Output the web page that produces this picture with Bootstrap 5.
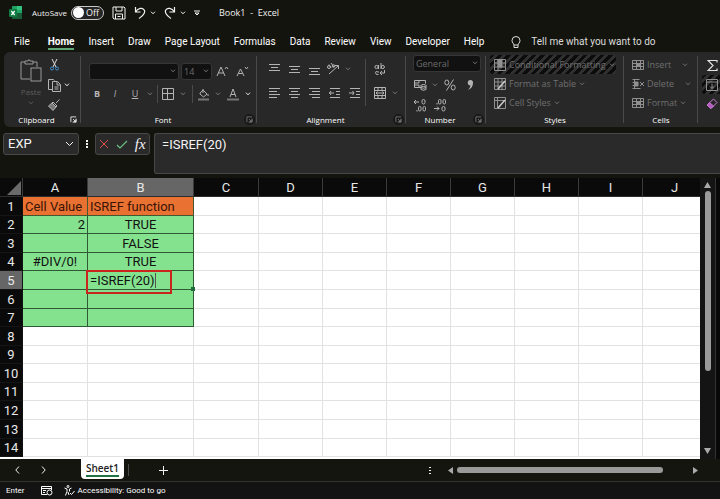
<!DOCTYPE html>
<html lang="en">
<head>
<meta charset="utf-8">
<meta name="viewport" content="width=device-width, initial-scale=1">
<title>Book1 - Excel</title>
<link href="https://cdn.jsdelivr.net/npm/bootstrap@5.3.0/dist/css/bootstrap.min.css" rel="stylesheet">
<style>
:root { --line:#4a4a4a; --dim:#707070; --ink:#b4b4b4; --panel:#282828; }
body { font-family:"Open Sans","Noto Sans",sans-serif; font-size:9px; line-height:12px; color:#f2f2f2; background:#14140f; overflow-x:hidden; }
button { background:none; border:0; padding:0; color:inherit; display:inline-flex; align-items:center; justify-content:center; flex:none; }
svg { flex:none; fill:none; stroke:currentColor; stroke-width:1; display:block; }
.topbar { height:25px; padding-left:9px; }
.topbar label { font-size:8px; margin:0 4px 0 10px; }
.doc-title { margin-left:11px; }
.autosave { width:33px; height:14px; border:1px solid #c8c8c8; border-radius:7px; background:#242424; padding:0 4px 0 1px; justify-content:space-between; }
.knob { width:11px; height:11px; border-radius:50%; background:#fff; }
.tabs { height:27px; padding:7px 0 0 14px; gap:14px; font-family:Roboto,sans-serif; font-size:10px; line-height:14px; }
.tabs a { color:#fff; text-decoration:none; border-bottom:2px solid transparent; line-height:13px; }
.tabs a.current { font-weight:700; border-color:#5fa777; margin-left:4px; }
.tell { gap:10px; margin-left:13px; color:#dcdcdc; }
.ribbon { margin-left:4px; height:75px; background:var(--panel); border-radius:6px 0 0 6px; overflow:hidden; color:var(--ink); }
.grp { position:relative; flex:none; padding-top:3px; }
.grp::after { content:""; position:absolute; right:0; top:4px; bottom:4px; width:1px; background:var(--line); }
.g-clip { width:77px; } .g-font { width:176px; } .g-align { width:149px; } .g-num { width:80px; } .g-style { width:138px; } .g-cells { width:74px; }
.glabel { height:12px; font-size:8px; line-height:12px; color:#fff; text-align:center; padding-right:12px; }
.glabel.mid { padding-right:0; }
.gbody { height:59px; }
.launch { position:absolute; right:2px; bottom:2px; width:11px; height:11px; border-radius:50%; background:#191919; color:#777; }
.launch.bright { background:none; color:#eee; }
.w-10px { width:10px; } .w-14px { width:14px; } .w-20px { width:20px; } .w-16px { width:16px; }
.line-h { height:20px; }
.vr-line { width:1px; height:18px; background:var(--line); flex:none; }
.vr-line.tall { height:47px; }
.vr-line.short { height:12px; }
.tight { margin:0 2px; }
.soft { color:#777; } .bright-ink { color:#eee; }
.paste { color:#5c5c5c; font-size:8px; gap:3px; padding-top:3px; }
.paste svg:first-child { color:#999; }
.drop { appearance:none; background:#111; border:1px solid #363636; border-radius:3px; color:#6c6c6c; font-size:9px; line-height:12px; height:17px; padding:0 0 0 2px; width:100%; }
.dropwrap { position:relative; flex:none; }
.d-name { width:90px; } .d-size { width:31px; margin-left:2px; } .d-num { width:68px; margin:0 0 3px 3px; }
.dropwrap svg { position:absolute; right:3px; top:6px; color:#777; pointer-events:none; }
.cmd { height:19px; color:var(--dim); gap:3px; justify-content:flex-start; border-radius:3px; }
.cmd svg:first-child { color:#909090; }
.hatch { background:repeating-linear-gradient(135deg,#0c0c0c 0 3px,#303030 3px 6px); }
.fbar { padding:6px 0 4px 3px; gap:4px; }
.box { background:#2a2a2a; border:1px solid #484848; border-radius:3px; color:#f4f4f4; }
.namebox { width:76px; height:22px; }
.entrybox { width:55px; height:22px; }
.formula { height:41px; resize:none; padding:3px 7px; outline:0; }
.cellfont { font-family:Roboto,"Liberation Sans",sans-serif; font-size:13px; line-height:16px; }
.fx { font-family:"Liberation Serif",serif; font-style:italic; font-size:15px; }
.cancel { color:#d84b4f; } .accept { color:#6cc083; }
.sheetwrap { background:#fff; overflow:hidden; min-width:0; height:281px; }
.grid { table-layout:fixed; width:707px; border-collapse:separate; border-spacing:0; color:#111; }
.grid th, .grid td { padding:1px 2px 0; height:19px; line-height:16px; border-right:1px solid #e2e2e2; border-bottom:1px solid #e2e2e2; white-space:nowrap; font-weight:400; }
.grid tr.low > * { height:18px; }
.grid thead th, .grid tbody th { background:#0a0a0a; color:#e8e8e8; text-align:center; border-color:#2c2c2c; }
.grid thead th { border-right-color:#3a3a3a; }
.grid tbody th { border-bottom-color:#151515; border-right-color:#111; }
.grid .picked { background:#666 !important; }
.grid .orange { background:#e97132; border-color:#44572f; color:#3a1404; }
.grid .green { background:#84e28f; border-color:#2f5a35; }
.c-head { width:23px; } .c-a { width:65px; } .c-b { width:106px; }
.edit { position:relative; }
.edit::before { content:""; position:absolute; left:-2px; top:-1px; width:86px; height:24px; border:2px solid #c9251c; z-index:1; }
.edit::after { content:""; position:absolute; right:-2px; bottom:-2px; width:4px; height:4px; background:#1f6b3c; }
.caret { border-right:1px solid #555; }
.corner { width:0; height:0; border-left:14px solid transparent; border-bottom:14px solid #6a6a6a; margin-left:5px; }
.vbar { width:20px; background:#141414; border-right:4px solid #080808; box-shadow:inset -1px 0 #333; padding:4px 1px 1px 0; }
.thumb-v { width:6px; border-radius:4px; background:#9a9a9a; height:180px; margin-top:3px; }
.thumb-h { height:6px; border-radius:3px; background:#9a9a9a; width:206px; margin:0 30px 0 4px; }
.strip { height:23px; background:#14150f; border-bottom:1px solid #333; padding:0 22px 0 12px; }
.sheettab { background:#fff; color:#222; height:20px; padding:0 5px; margin:0 4px 0 33px; border-radius:0 0 4px 4px; font-size:10px; font-weight:600; align-self:flex-start; }
.sheettab span { border-bottom:2px solid #1f7245; line-height:14px; }
.addsheet { margin-left:30px; }
.status { font-family:Roboto,sans-serif; font-size:8px; padding-left:6px; min-height:17px; background:#131313; color:#fff; }
.access { margin-left:11px; gap:3px; }
</style>
<script src="https://cdn.jsdelivr.net/npm/bootstrap@5.3.0/dist/js/bootstrap.bundle.min.js"></script>
</head>
<body class="d-flex flex-column min-vh-100">
<svg class="d-none">
  <symbol id="chev" viewBox="0 0 6 4"><path d="M1 .7 3 2.800 5 .7"/></symbol>
  <symbol id="launchi" viewBox="0 0 8 8"><path d="M1 7V1h6M7 3v4H3M3.500 3.500 6.500 6.500M6.500 4v2.500H4"/></symbol>
  <symbol id="tableicon" viewBox="0 0 12 12"><path d="M.5 1.500h11v9H.5zM.5 4.500h11M.5 7.500h11M4.500 1.500v9M8.500 1.500v9"/><path d="M4.500 4.500h4v3h-4z" fill="currentColor"/></symbol>
</svg>

<header class="topbar d-flex align-items-center">
  <svg width="13" height="13" viewBox="0 0 13 13"><g stroke="none"><rect x="3" y="0" width="10" height="13" rx="1" fill="#21a366"/><path fill="#33c481" d="M8 0h4q1 0 1 1v3H8z"/><path fill="#185c37" d="M3 7h10v5q0 1-1 1H4q-1 0-1-1z"/><rect y="3" width="8" height="8" rx="1" fill="#107c41"/></g><path d="m2.300 5 3.400 4M5.700 5 2.300 9" stroke="#fff" stroke-width="1.200"/></svg>
  <label for="autosave">AutoSave</label>
  <button id="autosave" class="autosave" role="switch" aria-checked="false"><span class="knob"></span><span>Off</span></button>
  <button class="ms-2" aria-label="Save"><svg width="14" height="14" viewBox="0 0 14 14"><path d="M1 1h11l1 1v11H2l-1-1zM4 1v4h6V1M3.500 13V8h7v5M5.500 10.500h3"/></svg></button>
  <button class="ms-2" aria-label="Undo"><svg width="12" height="14" viewBox="0 0 12 14"><path d="M1.500 1v5h5M1.500 6C4 2 9 1 10.500 4.500 11.500 8 8 10 5 12.500" stroke-width="1.200"/></svg></button>
  <button class="ms-1" aria-label="Undo list"><svg width="6" height="4"><use href="#chev"/></svg></button>
  <button class="ms-2" aria-label="Redo"><svg width="12" height="14" viewBox="0 0 12 14"><path d="M10.500 1v5h-5M10.500 6C8 2 3 1 1.500 4.500.5 8 4 10 7 12.500" stroke-width="1.200"/></svg></button>
  <button class="ms-1" aria-label="Redo list"><svg width="6" height="4"><use href="#chev"/></svg></button>
  <button class="ms-1 px-1" aria-label="Customize toolbar"><svg width="6" height="6" viewBox="0 0 6 6"><path d="M0 1h6M1 3l2 2 2-2z"/></svg></button>
  <span class="doc-title ps-1">Book1&nbsp; -&nbsp; Excel</span>
</header>

<nav class="tabs d-flex align-items-center">
  <a href="#">File</a><a href="#" class="current">Home</a><a href="#">Insert</a><a href="#">Draw</a><a href="#">Page Layout</a><a href="#">Formulas</a><a href="#">Data</a><a href="#">Review</a><a href="#">View</a><a href="#">Developer</a><a href="#">Help</a>
  <button class="tell"><svg width="10" height="13" viewBox="0 0 10 13"><path d="M3 9C3 7.500 1 7 1 4.500a4 4 0 0 1 8 0C9 7 7 7.500 7 9zM3 9v2.500h4V9"/></svg>Tell me what you want to do</button>
</nav>

<section class="ribbon d-flex">
  <div class="grp g-clip">
    <div class="gbody d-flex ps-3">
      <button class="paste flex-column justify-content-start"><svg width="22" height="25" viewBox="0 0 22 25"><path d="M10 21H1V4h4M13 4h4v5M5 6V3h3q1-3 2 0h3v3z"/><rect x="11" y="10" width="10" height="13"/></svg>Paste<svg width="6" height="4"><use href="#chev"/></svg></button>
      <div class="d-flex flex-column ms-1">
        <button class="line-h w-16px" aria-label="Cut"><svg width="9" height="12" viewBox="0 0 9 12"><path d="M2 0l4 8M7 0 3 8" stroke="#ddd"/><g stroke="#3b8fd0"><circle cx="2" cy="9.500" r="1.500"/><circle cx="7" cy="9.500" r="1.500"/></g></svg></button>
        <span class="d-flex"><button class="line-h w-16px" aria-label="Copy"><svg width="13" height="13" viewBox="0 0 13 13"><path d="M4.500 10.500h-4v-10h5l1 1M4.500 2.500h5l3 3v7h-8zM9 3v3h3M6.500 8h4M6.500 10h4"/></svg></button><button class="w-10px bright-ink" aria-label="Copy list"><svg width="6" height="4"><use href="#chev"/></svg></button></span>
        <button class="line-h w-16px" aria-label="Format painter"><svg width="12" height="12" viewBox="0 0 12 12"><path d="M11.500.5 8 4M5 3l4 4-1 1-4-4z"/><path d="M4 4 .5 7 5 11.500 8 8z" fill="#777"/></svg></button>
      </div>
    </div>
    <div class="glabel">Clipboard</div>
    <button class="launch bright" aria-label="Clipboard settings"><svg width="7" height="7"><use href="#launchi"/></svg></button>
  </div>

  <div class="grp g-font">
    <div class="gbody ps-2 pt-2">
      <div class="d-flex align-items-center">
        <div class="dropwrap d-name"><select class="drop" aria-label="Font"><option></option></select><svg width="6" height="4"><use href="#chev"/></svg></div>
        <div class="dropwrap d-size"><select class="drop" aria-label="Font size"><option>14</option></select><svg width="6" height="4"><use href="#chev"/></svg></div>
        <button class="w-20px" aria-label="Grow font"><svg width="13" height="12" viewBox="0 0 13 12"><path d="M1 10 5 1l4 9M2.500 7h5M9 3l1.500-2L12 3"/></svg></button>
        <button class="w-20px" aria-label="Shrink font"><svg width="13" height="12" viewBox="0 0 13 12"><path d="M1 10 4.500 3 8 10M2.500 7.500h4M9 1l1.500 2L12 1"/></svg></button>
      </div>
      <div class="d-flex align-items-center line-h mt-1">
        <button class="w-16px fw-bold">B</button><button class="w-20px fst-italic">I</button><button class="w-20px text-decoration-underline">U</button><button class="w-10px soft" aria-label="Underline list"><svg width="6" height="4"><use href="#chev"/></svg></button>
        <span class="vr-line tight"></span>
        <button class="w-16px" aria-label="Borders"><svg width="12" height="12" viewBox="0 0 12 12"><path d="M.5.5h11v11H.5zM5.500 .5v11M.5 5.500h11"/></svg></button><button class="w-14px soft" aria-label="Border list"><svg width="6" height="4"><use href="#chev"/></svg></button>
        <span class="vr-line tight"></span>
        <button class="w-16px" aria-label="Fill colour"><svg width="13" height="13" viewBox="0 0 13 13"><path d="M6 1v4M3 5l3-3 4 4-3.500 3L3 6zM11 6v2"/><path d="M1 11.500h11" stroke="#777" stroke-width="2"/></svg></button><button class="w-14px soft" aria-label="Fill list"><svg width="6" height="4"><use href="#chev"/></svg></button>
        <button class="w-16px" aria-label="Font colour"><svg width="12" height="13" viewBox="0 0 12 13"><path d="M3 9 6 1l3 8M4 6.500h4"/><path d="M0 11.500h12" stroke="#777" stroke-width="2"/></svg></button><button class="w-14px bright-ink" aria-label="Font colour list"><svg width="6" height="4"><use href="#chev"/></svg></button>
      </div>
    </div>
    <div class="glabel">Font</div>
    <button class="launch" aria-label="Font settings"><svg width="7" height="7"><use href="#launchi"/></svg></button>
  </div>

  <div class="grp g-align">
    <div class="gbody ps-1 pt-1 d-flex align-items-start">
      <div class="ps-1">
        <div class="d-flex line-h">
          <button class="w-20px" aria-label="Top align"><svg width="12" height="14" viewBox="0 0 12 14"><path d="M0 2.500h11M2 5.500h7M0 8.500h11"/></svg></button>
          <button class="w-20px" aria-label="Middle align"><svg width="12" height="14" viewBox="0 0 12 14"><path d="M0 4.500h11M2 7.500h7M0 10.500h11"/></svg></button>
          <button class="w-20px" aria-label="Bottom align"><svg width="12" height="14" viewBox="0 0 12 14"><path d="M0 6.500h11M2 9.500h7M0 12.500h11"/></svg></button>
          <button class="w-16px" aria-label="Orientation"><svg width="14" height="14" viewBox="0 0 14 14"><path d="M3 12 12 4M9 3.500h3.500V7"/><circle cx="3" cy="5" r="1.500"/><path d="m3 2.500 2 3.500M5 1l3 4"/><circle cx="7.500" cy="4" r="1.300"/></svg></button>
          <button class="w-14px soft" aria-label="Orientation list"><svg width="6" height="4"><use href="#chev"/></svg></button>
        </div>
        <div class="d-flex line-h mt-1">
          <button class="w-20px" aria-label="Align left"><svg width="12" height="12" viewBox="0 0 12 12"><path d="M0 1.500h11M0 4.500h8M0 7.500h11M0 10.500h8"/></svg></button>
          <button class="w-20px" aria-label="Center"><svg width="12" height="12" viewBox="0 0 12 12"><path d="M0 1.500h11M2 4.500h7M0 7.500h11M2 10.500h7"/></svg></button>
          <button class="w-20px" aria-label="Align right"><svg width="12" height="12" viewBox="0 0 12 12"><path d="M0 1.500h11M3 4.500h8M0 7.500h11M3 10.500h8"/></svg></button>
          <button class="w-20px" aria-label="Decrease indent"><svg width="12" height="12" viewBox="0 0 12 12"><path d="M1 1.500h10M7 4.500h4M7 7.500h4M1 10.500h10M0 6h5M2 4 .5 6 2 8"/></svg></button>
          <button class="w-20px" aria-label="Increase indent"><svg width="12" height="12" viewBox="0 0 12 12"><path d="M1 1.500h10M7 4.500h4M7 7.500h4M1 10.500h10M0 6h5M3.500 4 5 6 3.500 8"/></svg></button>
        </div>
      </div>
      <span class="vr-line tall"></span>
      <div class="ms-1">
        <button class="line-h w-20px" aria-label="Wrap text"><svg width="12" height="13" viewBox="0 0 12 13"><circle cx="2.500" cy="4" r="1.600"/><path d="M4.500 2v4M7 0v6M5 9H4Q1.500 7.500 1.500 9.800 1.500 12 4.500 11.500M10.500 7v3H6M8 8l-2 2 2 2"/><circle cx="8.800" cy="4" r="1.600"/></svg></button>
        <div class="d-flex mt-1"><button class="line-h w-20px" aria-label="Merge"><svg width="12" height="12" viewBox="0 0 12 12"><path d="M.5.5h11v11H.5zM.5 3.500h11M.5 8.500h11M4 .5v3M8 .5v3M4 8.500v3M8 8.500v3M2 6h8M3.500 4.500 2 6l1.500 1.500M8.500 4.500 10 6 8.500 7.500"/></svg></button><button class="w-10px soft" aria-label="Merge list"><svg width="6" height="4"><use href="#chev"/></svg></button></div>
      </div>
    </div>
    <div class="glabel">Alignment</div>
    <button class="launch" aria-label="Alignment settings"><svg width="7" height="7"><use href="#launchi"/></svg></button>
  </div>

  <div class="grp g-num">
    <div class="gbody ps-1">
      <div class="dropwrap d-num"><select class="drop" aria-label="Number format"><option>General</option></select><svg width="6" height="4"><use href="#chev"/></svg></div>
      <div class="d-flex line-h align-items-center">
        <button class="w-20px" aria-label="Currency"><svg width="13" height="12" viewBox="0 0 13 12"><path d="M7 8.500H.5v-7h11v3M2 3v4M6 3H4v4h2"/><ellipse cx="9.500" cy="6.500" rx="2.500" ry="1"/><path d="M7 6.500v4q2.500 1.500 5 0v-4M7 8.500q2.500 1.500 5 0"/></svg></button><button class="w-10px soft" aria-label="Currency list"><svg width="6" height="4"><use href="#chev"/></svg></button>
        <button class="w-20px" aria-label="Percent"><svg width="12" height="12" viewBox="0 0 12 12"><path d="M9.500.5l-7 11"/><ellipse cx="2.800" cy="3.500" rx="2" ry="2.500"/><ellipse cx="9.200" cy="8.500" rx="2" ry="2.500"/></svg></button>
        <button class="w-20px" aria-label="Comma"><svg width="7" height="11" viewBox="0 0 7 11"><path d="M3.500 0A2.500 2.500 0 0 1 6 3Q6 8 1 10 3 8 3.500 5.500A2.700 2.700 0 0 1 3.500 0z" fill="currentColor" stroke="none"/></svg></button>
      </div>
      <div class="d-flex line-h">
        <button class="w-20px" aria-label="Increase decimal"><svg width="12" height="13" viewBox="0 0 12 13"><path d="M0 3h5M2 1 0 3l2 2M3 11v1.500"/><rect x="8" y=".5" width="3" height="4.500" rx="1.500"/><rect x="4.500" y="7.500" width="2.500" height="4.500" rx="1.200"/><rect x="9" y="7.500" width="2.500" height="4.500" rx="1.200"/></svg></button>
        <button class="w-20px" aria-label="Decrease decimal"><svg width="12" height="13" viewBox="0 0 12 13"><path d="M0 9.500h5M3 7.500l2 2-2 2M3 4v1.500"/><rect x="4.500" y=".5" width="2.500" height="4.500" rx="1.200"/><rect x="9" y=".5" width="2.500" height="4.500" rx="1.200"/><rect x="8" y="7.500" width="3" height="4.500" rx="1.500"/></svg></button>
      </div>
    </div>
    <div class="glabel">Number</div>
    <button class="launch" aria-label="Number settings"><svg width="7" height="7"><use href="#launchi"/></svg></button>
  </div>

  <div class="grp g-style">
    <div class="gbody ps-1 pe-2 d-flex flex-column">
      <button class="cmd hatch ps-1"><svg width="12" height="12" viewBox="0 0 12 12"><path d="M.5.5h11v11H.5zM.5 4h11M.5 8h11M4 .5v11"/><path d="M4 1h4v7H4z" fill="currentColor"/></svg>Conditional Formatting<svg width="6" height="4"><use href="#chev"/></svg></button>
      <button class="cmd ps-1"><svg width="12" height="12" viewBox="0 0 12 12"><path d="M.5.5h11v11H.5zM.5 4h11M.5 8h11M4 .5v11M8 .5v11"/><path d="m4 11 7-8" stroke="#ccc" stroke-width="1.500"/></svg>Format as Table<svg width="6" height="4"><use href="#chev"/></svg></button>
      <button class="cmd ps-1"><svg width="12" height="12" viewBox="0 0 12 12"><path d="M.5.5h11v11H.5zM.5 3.500h11M3.500 .5v11"/><path d="m4 11 7-8" stroke="#ccc" stroke-width="1.500"/></svg>Cell Styles<svg width="6" height="4"><use href="#chev"/></svg></button>
    </div>
    <div class="glabel mid">Styles</div>
  </div>

  <div class="grp g-cells">
    <div class="gbody ps-2 d-flex flex-column">
      <button class="cmd"><svg width="12" height="12"><use href="#tableicon"/></svg>Insert<svg class="ms-2" width="6" height="4"><use href="#chev"/></svg></button>
      <button class="cmd"><svg width="12" height="12" viewBox="0 0 12 12"><path d="M.5 1.500h7M.5 4.500h5M.5 7.500h5M.5 10.500h8M2.500 1v9M8 4l4 4M12 4 8 8"/><path d="M3 4h3v4H3z" fill="currentColor"/></svg>Delete<svg class="ms-2" width="6" height="4"><use href="#chev"/></svg></button>
      <button class="cmd"><svg width="12" height="12"><use href="#tableicon"/></svg>Format<svg width="6" height="4"><use href="#chev"/></svg></button>
    </div>
    <div class="glabel mid">Cells</div>
  </div>

  <div class="pt-1 ps-1 d-flex flex-column">
    <button class="cmd w-20px justify-content-center" aria-label="AutoSum"><svg width="11" height="11" viewBox="0 0 11 11"><path d="M10 2.500V.5H1L6 5.500 1 10.500h9v-2" stroke="#e4e4e4" stroke-width="1.200"/></svg></button>
    <button class="cmd w-20px justify-content-center hatch" aria-label="Fill"><svg width="12" height="12" viewBox="0 0 12 12"><path d="M.5 .5h11v11H.5zM.5 3h11M6 4.500v5M4 7.500l2 2 2-2"/></svg></button>
    <button class="cmd w-20px justify-content-center" aria-label="Clear"><svg width="12" height="12" viewBox="0 0 12 12"><g stroke="#c678cf"><path d="M7.500 1 11 4.500 5 10.500 1 7z"/><path d="M3.500 4.500 7.500 8 5 10.500 1 7z" fill="#b35cc0"/></g></svg></button>
  </div>
</section>

<section class="fbar d-flex align-items-start">
  <button class="box namebox cellfont justify-content-between px-1">EXP<svg width="9" height="6" viewBox="0 0 9 6"><path d="M1 1l3.500 3.500L8 1"/></svg></button>
  <svg width="8" height="22" viewBox="0 0 8 22"><path d="M4 7v8" stroke-width="2" stroke-dasharray="2 1"/></svg>
  <div class="box entrybox d-flex align-items-center justify-content-around">
    <button class="cancel" aria-label="Cancel"><svg width="10" height="10" viewBox="0 0 10 10"><path d="m1 1 8 8M9 1 1 9"/></svg></button>
    <button class="accept" aria-label="Enter"><svg width="12" height="9" viewBox="0 0 12 9"><path d="M1 5l3 3 7-7" stroke-width="1.200"/></svg></button>
    <button class="fx" aria-label="Insert function">fx</button>
  </div>
  <textarea class="box formula cellfont flex-fill border-end-0 rounded-end-0" aria-label="Formula bar">=ISREF(20)</textarea>
</section>

<main class="d-flex">
  <div class="sheetwrap flex-fill">
    <table class="grid cellfont">
      <colgroup><col class="c-head"><col class="c-a"><col class="c-b"><col class="c-a"><col><col><col><col><col><col><col></colgroup>
      <thead><tr><th><div class="corner"></div></th><th>A</th><th class="picked">B</th><th>C</th><th>D</th><th>E</th><th>F</th><th>G</th><th>H</th><th>I</th><th>J</th></tr></thead>
      <tbody id="rows"></tbody>
    </table>
  </div>
  <div class="vbar d-flex flex-column align-items-center">
    <svg width="7" height="6" viewBox="0 0 7 6"><path d="M3.500 0 7 6H0z" fill="#aaa" stroke="none"/></svg>
    <div class="thumb-v"></div>
    <svg class="mt-auto mb-1" width="7" height="6" viewBox="0 0 7 6"><path d="M3.500 6 7 0H0z" fill="#aaa" stroke="none"/></svg>
  </div>
</main>

<footer class="d-flex flex-column flex-fill">
  <div class="strip d-flex align-items-center">
    <button class="w-10px" aria-label="Previous sheet"><svg width="5" height="8" viewBox="0 0 5 8"><path d="M4 .5.8 4 4 7.500"/></svg></button>
    <button class="w-10px ms-3" aria-label="Next sheet"><svg width="5" height="8" viewBox="0 0 5 8"><path d="M1 .5 4.200 4 1 7.500"/></svg></button>
    <button class="sheettab"><span>Sheet1</span></button>
    <span class="vr-line short"></span>
    <button class="addsheet" aria-label="New sheet"><svg width="9" height="9" viewBox="0 0 9 9"><path d="M4.500 0v9M0 4.500h9"/></svg></button>
    <svg class="ms-auto" width="4" height="9" viewBox="0 0 4 9"><path d="M2 1v8" stroke-width="2" stroke-dasharray="1 2"/></svg>
    <svg class="ms-3" width="5" height="7" viewBox="0 0 5 7"><path d="M0 3.500 5 0v7z" fill="#aaa" stroke="none"/></svg>
    <div class="thumb-h"></div>
    <svg width="5" height="7" viewBox="0 0 5 7"><path d="M5 3.500 0 0v7z" fill="#aaa" stroke="none"/></svg>
  </div>
  <div class="status d-flex align-items-center flex-fill">
    <span>Enter</span>
    <button class="ms-3" aria-label="Record macro"><svg width="12" height="11" viewBox="0 0 12 11"><path d="M6 9.500H.5v-8h10V5M.5 3.500h10M2 5.500h3M2 7.500h2"/><circle cx="8.500" cy="7.500" r="2.500"/></svg></button>
    <button class="access"><svg width="11" height="11" viewBox="0 0 11 11"><circle cx="4" cy="1.500" r="1"/><path d="M.5 3 3 4v2.500L1.500 10.500M7.500 3 5.500 4v2.500M4 7l1 3M6 8l1.500 1.500 3-3.500"/></svg>Accessibility: Good to go</button>
  </div>
</footer>

<script>
const data = { 1:['Cell Value','ISREF function'], 2:['2','TRUE'], 3:['','FALSE'], 4:['#DIV/0!','TRUE'], 5:['','=ISREF(20)'] };
const low = [2,4,7,9,11,14];
let html = '';
for (let r = 1; r <= 14; r++) {
  const d = data[r] || ['',''];
  const fill = r === 1 ? 'orange' : r <= 7 ? 'green' : '';
  const a = r === 2 ? 'text-end' : r === 4 ? 'text-center' : '';
  const b = r === 5 ? 'edit' : r > 1 ? 'text-center' : '';
  html += `<tr class="${low.includes(r) ? 'low' : ''}"><th class="${r === 5 ? 'picked' : ''}">${r}</th><td class="${fill} ${a}">${d[0]}</td><td class="${fill} ${b}">${r === 5 ? `<span class="caret">${d[1]}</span>` : d[1]}</td>${'<td></td>'.repeat(8)}</tr>`;
}
document.getElementById('rows').innerHTML = html;
</script>
</body>
</html>
